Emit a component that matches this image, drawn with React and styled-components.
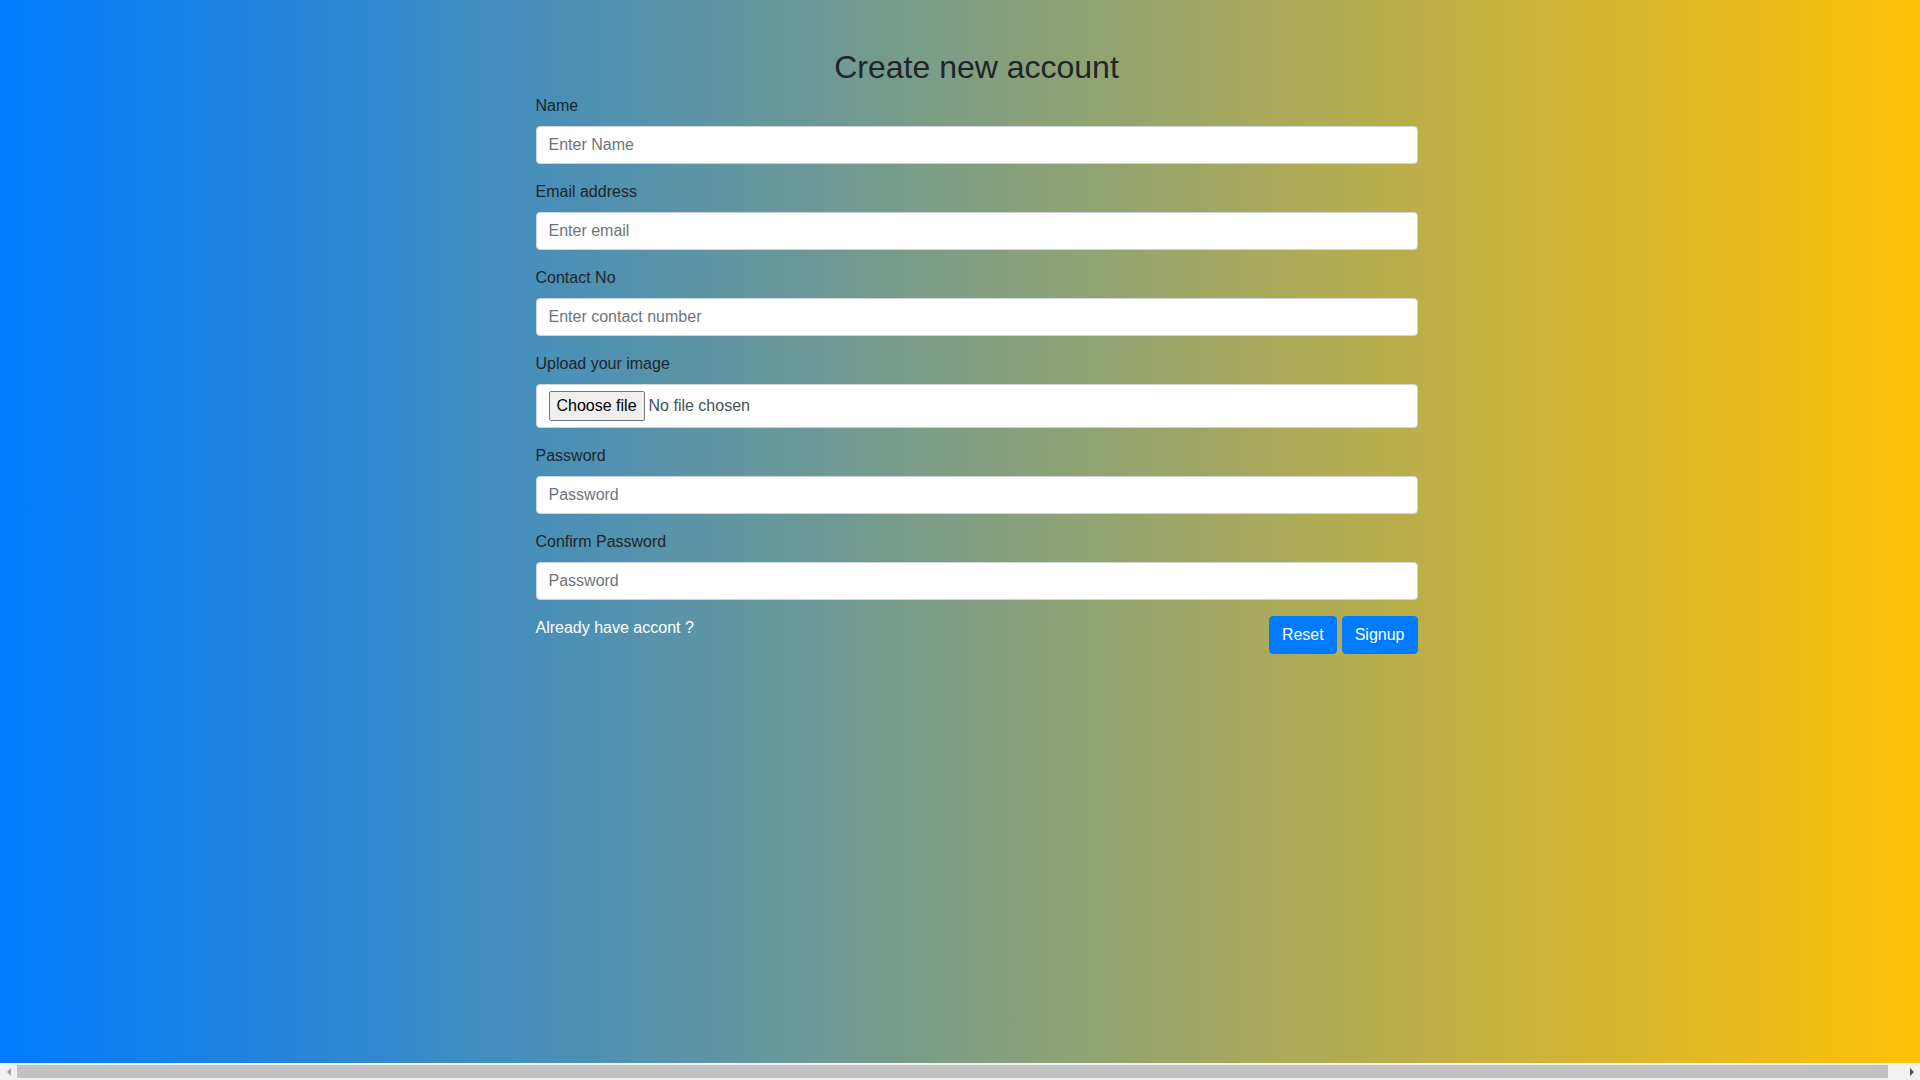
import React from "react";
import styled, { createGlobalStyle } from "styled-components";

const GlobalStyle = createGlobalStyle`
  html, body { margin: 0; padding: 0; }
  body {
    font-family: "Liberation Sans", Arial, sans-serif;
    font-size: 16px;
    line-height: 1.5;
    color: #212529;
    overflow: hidden;
  }
  * { box-sizing: border-box; }
`;

const Page = styled.div`
  height: 100vh;
  display: flex;
  flex-direction: column;
`;

const Canvas = styled.main`
  flex: 1;
  background: linear-gradient(to right, #007bff, #ffc107);
  display: flex;
  justify-content: center;
  padding: 48px 0 0 33px;
`;

const Form = styled.form`
  width: 882px;
  display: flex;
  flex-direction: column;
`;

const Title = styled.h2`
  margin: 0 0 8px;
  font-size: 32px;
  font-weight: 500;
  line-height: 1.2;
  text-align: center;
  color: #212529;
`;

const Group = styled.div`
  display: flex;
  flex-direction: column;
  margin-bottom: 16px;
`;

const Label = styled.label`
  display: block;
  margin-bottom: 8px;
  font-size: 16px;
  line-height: 24px;
  color: #212529;
`;

const Input = styled.input`
  display: block;
  width: 100%;
  height: 38px;
  padding: 6px 12px;
  font-family: "Liberation Sans", Arial, sans-serif;
  font-size: 16px;
  line-height: 1.5;
  color: #495057;
  background: #fff;
  border: 1px solid #ced4da;
  border-radius: 4px;
  outline: none;
  &::placeholder { color: #6c757d; opacity: 1; }
`;

const FileBox = styled.div`
  display: flex;
  align-items: center;
  height: 44px;
  padding: 0 12px;
  background: #fff;
  border: 1px solid #ced4da;
  border-radius: 4px;
`;

const FileButton = styled.button`
  height: 30px;
  padding: 1px 7px;
  margin-right: 4px;
  font-family: "Liberation Sans", Arial, sans-serif;
  font-size: 16px;
  color: #000;
  background: #efefef;
  border: 1px solid #767676;
  border-radius: 2px;
`;

const FileText = styled.span`
  font-size: 16px;
  color: #495057;
`;

const Footer = styled.div`
  display: flex;
  justify-content: space-between;
  align-items: flex-start;
`;

const LinkText = styled.a`
  color: #fff;
  font-size: 16px;
  line-height: 24px;
  text-decoration: none;
`;

const Buttons = styled.div`
  display: flex;
  gap: 5px;
`;

const PrimaryButton = styled.button`
  height: 38px;
  padding: 6px 12px;
  font-family: "Liberation Sans", Arial, sans-serif;
  font-size: 16px;
  line-height: 1.5;
  color: #fff;
  background: #007bff;
  border: 1px solid #007bff;
  border-radius: 4px;
`;

const ScrollBar = styled.div`
  height: 17px;
  background: #f1f1f1;
  display: flex;
  align-items: center;
`;

const Arrow = styled.div`
  width: 17px;
  height: 17px;
  display: flex;
  align-items: center;
  justify-content: center;
  &::before {
    content: "";
    width: 0;
    height: 0;
    border-top: 4px solid transparent;
    border-bottom: 4px solid transparent;
    ${(p) =>
      p.$dir === "left"
        ? `border-right: 4px solid #a3a3a3;`
        : `border-left: 4px solid #505050;`}
  }
`;

const Thumb = styled.div`
  flex: 1;
  height: 13px;
  margin-right: 15px;
  background: #c1c1c1;
`;

const fields = [
  { label: "Name", type: "text", placeholder: "Enter Name" },
  { label: "Email address", type: "email", placeholder: "Enter email" },
  { label: "Contact No", type: "text", placeholder: "Enter contact number" },
];

const pwFields = [
  { label: "Password", placeholder: "Password" },
  { label: "Confirm Password", placeholder: "Password" },
];

export default function App() {
  return (
    <>
      <GlobalStyle />
      <Page>
        <Canvas>
          <Form onSubmit={(e) => e.preventDefault()}>
            <Title>Create new account</Title>
            {fields.map((f) => (
              <Group key={f.label}>
                <Label>{f.label}</Label>
                <Input type={f.type} placeholder={f.placeholder} />
              </Group>
            ))}
            <Group>
              <Label>Upload your image</Label>
              <FileBox>
                <FileButton type="button">Choose file</FileButton>
                <FileText>No file chosen</FileText>
              </FileBox>
            </Group>
            {pwFields.map((f) => (
              <Group key={f.label}>
                <Label>{f.label}</Label>
                <Input type="password" placeholder={f.placeholder} />
              </Group>
            ))}
            <Footer>
              <LinkText href="#">Already have accont ?</LinkText>
              <Buttons>
                <PrimaryButton type="reset">Reset</PrimaryButton>
                <PrimaryButton type="submit">Signup</PrimaryButton>
              </Buttons>
            </Footer>
          </Form>
        </Canvas>
        <ScrollBar>
          <Arrow $dir="left" />
          <Thumb />
          <Arrow $dir="right" />
        </ScrollBar>
      </Page>
    </>
  );
}
